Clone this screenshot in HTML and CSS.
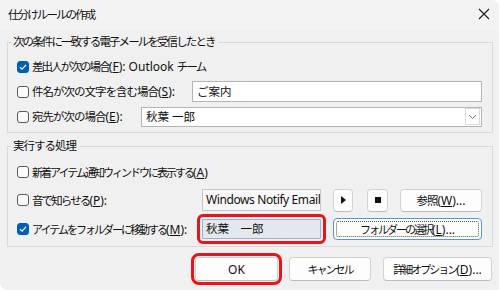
FILE: index.html
```html
<!DOCTYPE html>
<html lang="ja">
<head>
  <meta charset="UTF-8">
  <title>仕分けルールの作成</title>
  <link rel="stylesheet" href="styles.css">
</head>
<body>

<div class="window">
  <div class="titlebar">
    <span class="title ja">仕分けルールの作成</span>
    <svg class="close" width="12" height="12" viewBox="0 0 12 12">
      <path d="M1 1 L11 11 M11 1 L1 11" stroke="#1a1a1a" stroke-width="1.1" fill="none"/>
    </svg>
  </div>

  <fieldset class="group first">
    <legend class="ja">次の条件に一致する電子メールを受信したとき</legend>
    <div class="row">
      <span class="check on"><svg width="10" height="10" viewBox="0 0 10 10"><path d="M2 5.2 L4.1 7.2 L8 2.8" stroke="#fff" stroke-width="1.2" fill="none"/></svg></span>
      <span class="label ja">差出人が次の場合<span class="lat">(<u>F</u>): Outlook </span>チーム</span>
    </div>
    <div class="row">
      <span class="check"></span>
      <span class="label ja wide grow">件名が次の文字を含む場合<span class="lat">(<u>S</u>):</span></span>
      <div class="field subject">ご案内</div>
    </div>
    <div class="row">
      <span class="check"></span>
      <span class="label ja wide grow">宛先が次の場合<span class="lat">(<u>E</u>):</span></span>
      <div class="field combo">
        <span class="value">秋葉 一郎</span>
        <span class="drop"><svg width="9" height="6" viewBox="0 0 9 6"><path d="M1 1 L4.5 4.5 L8 1" stroke="#777" stroke-width="1" fill="none"/></svg></span>
      </div>
    </div>
  </fieldset>

  <fieldset class="group second">
    <legend class="ja wide">実行する処理</legend>
    <div class="row tall">
      <span class="check"></span>
      <span class="label ja tight">新着アイテム通知ウィンドウに表示する<span class="lat">(<u>A</u>)</span></span>
    </div>
    <div class="row tall">
      <div class="opt">
        <span class="check"></span>
        <span class="label ja">音で知らせる<span class="lat">(<u>P</u>):</span></span>
      </div>
      <div class="field sound">Windows Notify Email</div>
      <button class="btn play"><svg width="5" height="8" viewBox="0 0 5 8"><path d="M0 0 L5 4 L0 8 Z" fill="#111"/></svg></button>
      <button class="btn stop"><svg width="6" height="6" viewBox="0 0 6 6"><rect width="6" height="6" fill="#111"/></svg></button>
      <button class="btn browse"><span class="ja wide">参照<span class="lat">(<u>W</u>)...</span></span></button>
    </div>
    <div class="row taller">
      <div class="opt">
        <span class="check on"><svg width="10" height="10" viewBox="0 0 10 10"><path d="M2 5.2 L4.1 7.2 L8 2.8" stroke="#fff" stroke-width="1.2" fill="none"/></svg></span>
        <span class="label ja tight">アイテムをフォルダーに移動する<span class="lat">(<u>M</u>):</span></span>
      </div>
      <div class="field folder marked">秋葉　一郎</div>
      <button class="btn pick"><span class="ja tight">フォルダーの選択<span class="lat">(<u>L</u>)...</span></span></button>
    </div>
  </fieldset>

  <div class="actions">
    <button class="btn ok marked">OK</button>
    <button class="btn cancel"><span class="ja tight">キャンセル</span></button>
    <button class="btn more"><span class="ja tight">詳細オプション<span class="lat">(<u>D</u>)...</span></span></button>
  </div>
</div>

</body>
</html>
```

FILE: styles.css
```css
* {
  margin: 0;
  padding: 0;
  box-sizing: border-box;
}

html, body {
  width: 500px;
  height: 290px;
  overflow: hidden;
  background-color: #fff;
}

body {
  font-family: "Noto Sans", "Noto Sans CJK JP", sans-serif;
  font-size: 12px;
  color: #111;
}

/* Japanese runs are set narrow to match the system UI font */
.ja {
  font-size: 11.5px;
  letter-spacing: -1.9px;
  white-space: nowrap;
}

.ja.wide {
  letter-spacing: -1px;
}

.ja.tight {
  font-size: 11px;
  letter-spacing: -2px;
}

.lat {
  font-size: 12px;
  letter-spacing: 0;
}

u {
  text-underline-offset: 1px;
}

.window {
  width: 499px;
  height: 290px;
  background-color: #f0f0f0;
  border-radius: 0 8px 0 8px;
  display: flex;
  flex-direction: column;
}

.titlebar {
  height: 30px;
  background-color: #f3f3f3;
  border-radius: 0 8px 0 0;
  display: flex;
  justify-content: space-between;
  align-items: center;
  padding: 0 9px 3px 8px;
}

.close {
  display: block;
}

.group {
  border: 1px solid #d9d9d9;
  margin: 4px 6px 0 7px;
  padding: 4px 10px 3px 3px;
}

.group legend {
  padding: 0 3px 0 2px;
  line-height: 16px;
}

.group.second {
  margin-top: 5px;
  padding-bottom: 2px;
}

.row {
  display: flex;
  align-items: center;
  height: 25px;
  padding-left: 6px;
}

.row.tall {
  height: 28px;
}

.row.taller {
  height: 30px;
}

.opt {
  display: flex;
  align-items: center;
  width: 185px;
  flex: none;
}

.check {
  width: 12px;
  height: 12px;
  border: 1px solid #5a5a5a;
  border-radius: 3px;
  background-color: #fcfcfc;
  margin-right: 3px;
  flex: none;
  display: flex;
  align-items: center;
  justify-content: center;
}

.check.on {
  background-color: #005fb8;
  border-color: #005fb8;
}

.label.grow {
  flex: 1;
}

.field {
  height: 21px;
  border: 1px solid #b4b4b4;
  background-color: #fff;
  padding: 0 4px;
  font-size: 11.5px;
  line-height: 19px;
  white-space: nowrap;
  overflow: hidden;
  flex: none;
}

.subject {
  width: 290px;
}

.combo {
  width: 341px;
  height: 20px;
  line-height: 18px;
  padding-right: 1px;
  display: flex;
  align-items: center;
}

.drop {
  margin-left: auto;
  width: 15px;
  height: 17px;
  border: 1px solid #dcdcdc;
  background-color: #fff;
  display: flex;
  align-items: center;
  justify-content: center;
}

.sound {
  width: 119px;
  height: 22px;
  line-height: 20px;
  background-color: #f7f7f7;
  border-color: #c8c8c8;
  padding-left: 3px;
  font-size: 12px;
  letter-spacing: -0.4px;
}

.folder {
  width: 119px;
  height: 20px;
  line-height: 18px;
  background-color: #e4e8ee;
  border-color: #9fb1c6;
  padding-left: 3px;
}

.marked {
  outline: 3px solid #e8141c;
  outline-offset: 2px;
  border-radius: 1px;
}

.btn {
  font-family: inherit;
  font-size: 12px;
  color: #111;
  height: 23px;
  background-color: #fdfdfd;
  border: 1px solid #d2d2d2;
  border-bottom-color: #bcbcbc;
  border-radius: 4px;
  display: flex;
  align-items: center;
  justify-content: center;
  flex: none;
  white-space: nowrap;
}

.play {
  width: 20px;
  margin-left: 12px;
}

.stop {
  width: 21px;
  margin-left: 14px;
}

.browse {
  width: 82px;
  margin-left: 12px;
}

.pick {
  width: 149px;
  height: 22px;
  margin-left: 12px;
  border-color: #5f93d2;
  position: relative;
}

.pick::after {
  content: "";
  position: absolute;
  inset: 2px;
  border: 1px dotted #555;
  border-radius: 2px;
}

.actions {
  display: flex;
  justify-content: flex-end;
  gap: 11px;
  padding: 10px 7px 0 0;
}

.actions .btn {
  height: 24px;
}

.ok {
  width: 83px;
  outline-offset: 1px;
}

.cancel {
  width: 82px;
}

.more {
  width: 109px;
  margin-left: 1px;
}
```
